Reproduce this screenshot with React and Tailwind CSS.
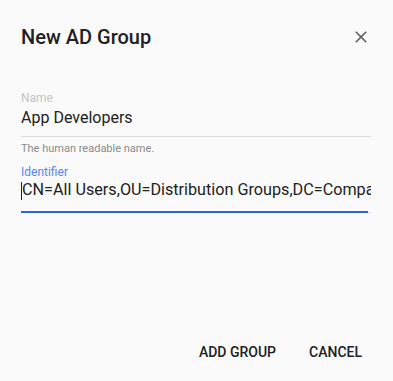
import React from "react";

export default function App() {
    return (
        <div
            className="w-[393px] h-[381px] bg-[#fafafa] flex flex-col text-[#212121]"
            style={{ fontFamily: "Roboto, 'Noto Sans', sans-serif" }}
        >
            {/* header */}
            <div className="flex items-center justify-between pl-[21px] pr-[22px] pt-[23px]">
                <h2 className="text-[20px] leading-7 font-medium">New AD Group</h2>
                <button className="w-5 h-5 flex items-center justify-center text-[#666]">
                    <svg viewBox="0 0 24 24" className="w-5 h-5" fill="currentColor">
                        <path d="M19 6.41 17.59 5 12 10.59 6.41 5 5 6.41 10.59 12 5 17.59 6.41 19 12 13.41 17.59 19 19 17.59 13.41 12z" />
                    </svg>
                </button>
            </div>

            {/* form */}
            <div className="pl-[21px] w-[371px] mt-[39px]">
                <div className="text-[12px] leading-4 text-[#c4c4c4]">Name</div>
                <div className="mt-[2px] pb-2 text-[16px] leading-5 border-b border-[#dcdcdc]">
                    App Developers
                </div>
                <div className="mt-[5px] text-[11px] leading-[14px] text-[#8a8a8a]">
                    The human readable name.
                </div>

                <div className="mt-[8px] text-[12px] leading-4 text-[#5a84ee]">Identifier</div>
                <div className="h-[31px] text-[16.2px] leading-5 overflow-hidden whitespace-nowrap flex items-start">
                    <span className="shrink-0 w-px h-[18px] bg-[#222] mt-[2px]"></span>
                    <span>CN=All Users,OU=Distribution Groups,DC=Company,DC=com</span>
                </div>
                <div className="flex items-end">
                    <div className="h-[2px] w-[347px] bg-[#2d66e0]"></div>
                    <div className="h-px flex-1 bg-[#dcdcdc]"></div>
                </div>
            </div>

            {/* actions */}
            <div className="mt-auto mb-[19px] flex justify-end gap-[17px] pr-[23px]">
                <button className="px-2 text-[14px] leading-5 font-medium uppercase">Add Group</button>
                <button className="px-2 text-[14px] leading-5 font-medium uppercase">Cancel</button>
            </div>
        </div>
    );
}
